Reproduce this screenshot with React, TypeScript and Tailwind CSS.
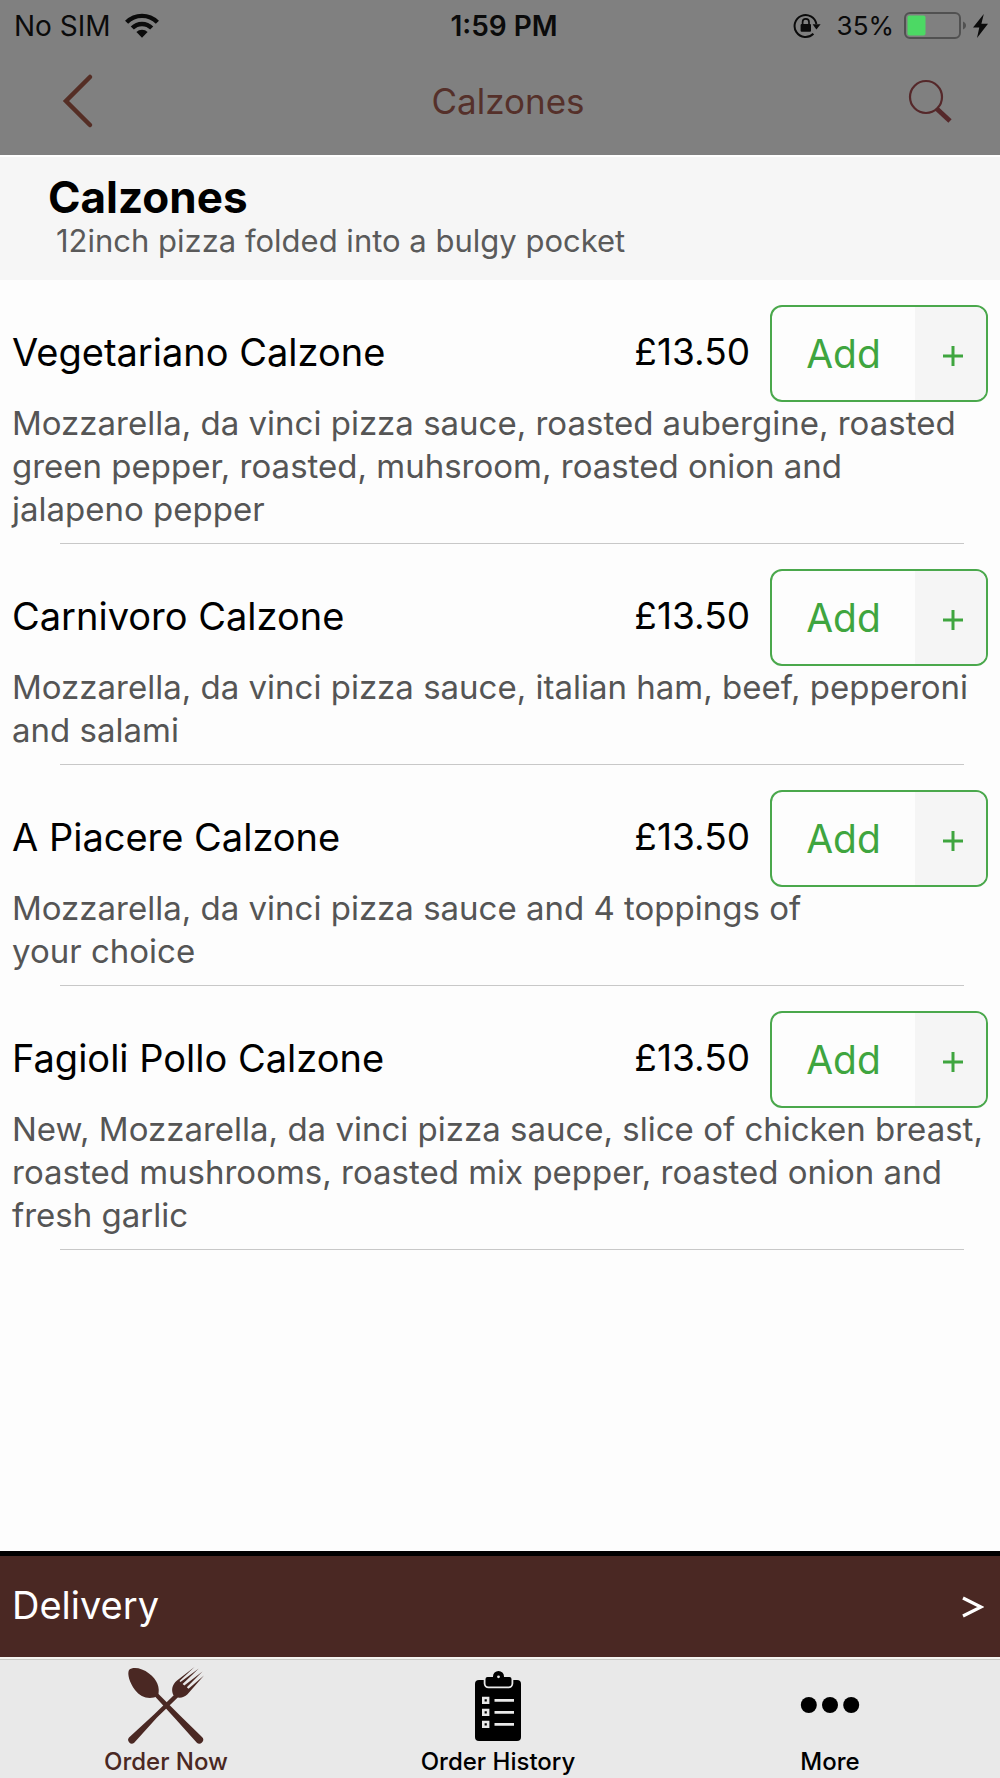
type MenuItem = { name: string; price: string; description: string };

const menu: MenuItem[] = [
  {
    name: "Vegetariano Calzone",
    price: "£13.50",
    description:
      "Mozzarella, da vinci pizza sauce, roasted aubergine, roasted green pepper, roasted, muhsroom, roasted onion and\njalapeno pepper",
  },
  {
    name: "Carnivoro Calzone",
    price: "£13.50",
    description: "Mozzarella, da vinci pizza sauce, italian ham, beef, pepperoni and salami",
  },
  {
    name: "A Piacere Calzone",
    price: "£13.50",
    description: "Mozzarella, da vinci pizza sauce and 4 toppings of\nyour choice",
  },
  {
    name: "Fagioli Pollo Calzone",
    price: "£13.50",
    description:
      "New, Mozzarella, da vinci pizza sauce, slice of chicken breast, roasted mushrooms, roasted mix pepper, roasted onion and fresh garlic",
  },
];

function WifiIcon() {
  return (
    <svg width="34" height="25" viewBox="0 0 34 25" aria-hidden="true">
      <g fill="none" stroke="#0b0b0b" strokeWidth="4.4">
        <path d="M1.6 9.2a21.8 21.8 0 0 1 30.8 0" />
        <path d="M7.3 15a13.7 13.7 0 0 1 19.4 0" />
      </g>
      <path d="M11.4 19a8 8 0 0 1 11.2 0L17 24.8z" fill="#0b0b0b" />
    </svg>
  );
}

function RotationLockIcon() {
  return (
    <svg width="28" height="26" viewBox="0 0 28 26" aria-hidden="true">
      <path d="M20.4 20.8A11 11 0 1 1 23.4 11" fill="none" stroke="#0b0b0b" strokeWidth="2" />
      <path d="M19.6 11.2h8L23.4 16.4z" fill="#0b0b0b" />
      <rect x="7.6" y="11" width="10.4" height="7.8" rx="1" fill="#0b0b0b" />
      <path d="M9.6 11.5V9a3.2 3.2 0 0 1 6.4 0v2.5" fill="none" stroke="#0b0b0b" strokeWidth="1.7" />
    </svg>
  );
}

function BatteryIcon() {
  return (
    <svg width="62" height="27" viewBox="0 0 62 27" aria-hidden="true">
      <rect x="1" y="1" width="55" height="25" rx="5" fill="none" stroke="#515151" strokeWidth="2" />
      <rect x="3.5" y="3.5" width="18" height="20" rx="2" fill="#4cd964" />
      <path d="M59 9.5c2 1 3 2.300 3 4s-1 3-3 4z" fill="#515151" />
    </svg>
  );
}

function BoltIcon() {
  return (
    <svg width="15" height="24" viewBox="0 0 15 24" aria-hidden="true">
      <path d="M10.800 0 0 13.600h6.300L4 24 15 9.800H8.400z" fill="#0b0b0b" />
    </svg>
  );
}

function CutleryIcon() {
  return (
    <svg width="78" height="78" viewBox="0 0 78 78" fill="#4a2823" aria-hidden="true">
      <path d="M2 4C6 .5 15 2 22 7.500c8 6 11.500 14 9 22.500 -8 4-17 2-23-6C2.500 16.500 0 8 2 4z" />
      <path d="M28 30.500l3-3L53 49.500 75 71a3.800 3.800 0 0 1-5.400 5.400L49 53.500z" />
      <path d="M51 31.200l-3.200-3L27 48.500 2 71.500A3.700 3.700 0 0 0 7.200 76.700L30 51.500z" />
      <path d="M67.500 1 50 14.500c-4.800 4-6 9-3.700 14.500 4.500 4.200 10 3 14.200-.8L77 9.500 61.500 22.800l-1.700-1.600L75.500 5.600 57.300 19.500l-1.700-1.600L71.800 2.600 53.500 16l-1-1z" />
    </svg>
  );
}

function ClipboardIcon() {
  return (
    <svg width="46" height="71" viewBox="0 0 46 71" aria-hidden="true">
      <rect x="0" y="10" width="46" height="61" rx="4" fill="#000" />
      <path
        d="M18 6.500a5.500 5.500 0 0 1 11 0V7h5.500A2 2 0 0 1 36.500 9v4.500a3 3 0 0 1-3 3h-20a3 3 0 0 1-3-3V9a2 2 0 0 1 2-2H18z"
        fill="#000"
        stroke="#e9e9e9"
        strokeWidth="3.600"
        paintOrder="stroke"
      />
      <circle cx="23.500" cy="6.800" r="1.400" fill="#e9e9e9" />
      <g fill="none" stroke="#e9e9e9">
        <path d="M8.300 28h4.800v4.800H8.300zM8.300 40h4.800v4.800H8.300zM8.300 52h4.800v4.800H8.300z" strokeWidth="2.600" />
        <path d="M19.500 30.400H39M19.500 42.400H39M19.500 54.400H39" strokeWidth="2.600" />
      </g>
    </svg>
  );
}

function DotsIcon() {
  return (
    <svg width="60" height="16" viewBox="0 0 60 16" fill="#000" aria-hidden="true">
      <circle cx="8.800" cy="8" r="8" />
      <circle cx="30" cy="8" r="8" />
      <circle cx="51.200" cy="8" r="8" />
    </svg>
  );
}

function StatusBar() {
  return (
    <div className="grid h-[51px] grid-cols-3 items-center px-3 text-[28px] leading-none text-[#0b0b0b]">
      <div className="flex items-center gap-3.5 pl-0.5">
        <span>No SIM</span>
        <WifiIcon />
      </div>
      <div className="pl-2 text-center font-semibold whitespace-nowrap">1:59 PM</div>
      <div className="flex items-center justify-end">
        <RotationLockIcon />
        <span className="mr-2.5 ml-4 text-[26px]">35%</span>
        <BatteryIcon />
        <span className="ml-[7px]">
          <BoltIcon />
        </span>
      </div>
    </div>
  );
}

function NavBar() {
  return (
    <div className="flex h-[104px] items-center justify-between px-[46px] pb-1">
      <button type="button" aria-label="Back" className="flex h-16 w-16 items-center justify-center">
        <svg width="32" height="56" viewBox="0 0 32 56" aria-hidden="true">
          <path d="M28 4 4 28l24 24" fill="none" stroke="#552e25" strokeWidth="4.500" strokeLinecap="round" />
        </svg>
      </button>
      <h1 className="text-[35px] leading-none text-[#55302a]">Calzones</h1>
      <button type="button" aria-label="Search" className="flex h-16 w-12 items-center justify-center">
        <svg width="44" height="44" viewBox="0 0 44 44" fill="none" stroke="#55282a" aria-hidden="true">
          <circle cx="18" cy="18" r="16" strokeWidth="2.200" />
          <path d="M28.500 29.500 42 42" strokeWidth="4.800" />
        </svg>
      </button>
    </div>
  );
}

function MenuRow({ item }: { item: MenuItem }) {
  return (
    <li className="pt-[25px]">
      <div className="flex h-[97px] items-center px-3">
        <h3 className="flex-1 pb-1 text-[38px] leading-none text-black">{item.name}</h3>
        <span className="mr-5 pb-1 text-[37px] leading-none text-black">{item.price}</span>
        <button
          type="button"
          aria-label={`Add ${item.name}`}
          className="flex h-full w-[218px] overflow-hidden rounded-xl border-2 border-[#4aa84c] text-[#3fa53f]"
        >
          <span className="flex h-full flex-1 items-center justify-center text-[39px] leading-none">Add</span>
          <span className="flex h-full w-[71px] items-center justify-center bg-[#f5f5f5]">
            <svg width="20" height="20" viewBox="0 0 20 20" aria-hidden="true" className="mt-1 ml-1">
              <path d="M10 0v20M0 10h20" stroke="currentColor" strokeWidth="3" />
            </svg>
          </span>
        </button>
      </div>
      <p className="px-3 pb-3 text-[33px] leading-[43px] whitespace-pre-line text-[#555]">{item.description}</p>
      <div className="mr-9 ml-15 border-b border-[#c8c8c8]" />
    </li>
  );
}

export default function App() {
  return (
    <div className="flex min-h-screen flex-col bg-[#fdfdfd] font-['Inter',sans-serif]">
      <header className="bg-[#808080]">
        <StatusBar />
        <NavBar />
      </header>

      <main className="flex-1">
        <section className="border-t-2 border-white bg-[#f6f6f6] px-12 pt-[18px] pb-[17px]">
          <h2 className="text-[44px] leading-[44px] font-bold text-black">Calzones</h2>
          <p className="pl-2 text-[31px] leading-[44px] text-[#5a5a5a]">12inch pizza folded into a bulgy pocket</p>
        </section>
        <ul>
          {menu.map((item) => (
            <MenuRow key={item.name} item={item} />
          ))}
        </ul>
      </main>

      <footer>
        <button
          type="button"
          className="flex h-[106px] w-full items-center justify-between border-t-5 border-black bg-[#4a2823] pr-4 pl-3 text-[38px] leading-none text-white"
        >
          <span className="pb-1">Delivery</span>
          <svg width="22" height="22" viewBox="0 0 22 22" aria-hidden="true">
            <path d="M1 2 19 11 1 20" fill="none" stroke="#fff" strokeWidth="3.200" />
          </svg>
        </button>
        <nav className="border-t-2 border-[#f4f4f0] bg-[#e9e9e9]">
          <div className="grid h-[119px] grid-cols-3 border-t border-[#c8cac4] pr-1 text-2xl leading-none font-medium text-black">
            <a href="#order" className="flex flex-col items-center text-[#4a2823]">
              <span className="flex h-[90px] items-center">
                <CutleryIcon />
              </span>
              Order Now
            </a>
            <a href="#history" className="flex flex-col items-center">
              <span className="flex h-[90px] items-center">
                <ClipboardIcon />
              </span>
              Order History
            </a>
            <a href="#more" className="flex flex-col items-center">
              <span className="flex h-[90px] items-center">
                <DotsIcon />
              </span>
              More
            </a>
          </div>
        </nav>
      </footer>
    </div>
  );
}
